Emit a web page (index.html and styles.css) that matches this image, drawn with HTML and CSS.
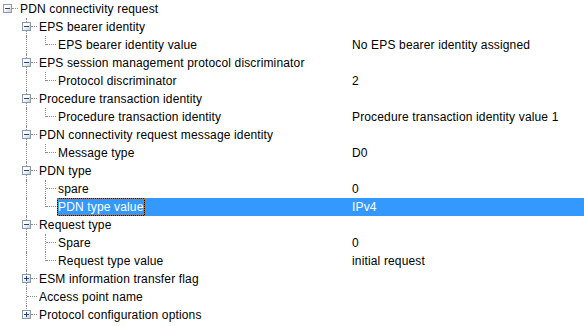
FILE: index.html
```html
<!DOCTYPE html>
<html lang="en">
<head>
    <meta charset="UTF-8">
    <title>PDN connectivity request</title>
    <link rel="stylesheet" href="styles.css">
</head>
<body>

    <div class="tree">
        <div class="row">
            <span class="g first"><i class="box minus"></i><b class="h"></b></span>
            <div class="item"><div class="col"><span class="name">PDN connectivity request</span></div><span class="value"></span></div>
        </div>

        <div class="row">
            <span class="g first"></span>
            <span class="g tee"><i class="box minus"></i><b class="h"></b></span>
            <div class="item"><div class="col"><span class="name">EPS bearer identity</span></div><span class="value"></span></div>
        </div>
        <div class="row">
            <span class="g first"></span>
            <span class="g pipe"></span>
            <span class="g last"><b class="h"></b></span>
            <div class="item"><div class="col"><span class="name">EPS bearer identity value</span></div><span class="value">No EPS bearer identity assigned</span></div>
        </div>

        <div class="row">
            <span class="g first"></span>
            <span class="g tee"><i class="box minus"></i><b class="h"></b></span>
            <div class="item"><div class="col"><span class="name">EPS session management protocol discriminator</span></div><span class="value"></span></div>
        </div>
        <div class="row">
            <span class="g first"></span>
            <span class="g pipe"></span>
            <span class="g last"><b class="h"></b></span>
            <div class="item"><div class="col"><span class="name">Protocol discriminator</span></div><span class="value">2</span></div>
        </div>

        <div class="row">
            <span class="g first"></span>
            <span class="g tee"><i class="box minus"></i><b class="h"></b></span>
            <div class="item"><div class="col"><span class="name">Procedure transaction identity</span></div><span class="value"></span></div>
        </div>
        <div class="row">
            <span class="g first"></span>
            <span class="g pipe"></span>
            <span class="g last"><b class="h"></b></span>
            <div class="item"><div class="col"><span class="name">Procedure transaction identity</span></div><span class="value">Procedure transaction identity value 1</span></div>
        </div>

        <div class="row">
            <span class="g first"></span>
            <span class="g tee"><i class="box minus"></i><b class="h"></b></span>
            <div class="item"><div class="col"><span class="name">PDN connectivity request message identity</span></div><span class="value"></span></div>
        </div>
        <div class="row">
            <span class="g first"></span>
            <span class="g pipe"></span>
            <span class="g last"><b class="h"></b></span>
            <div class="item"><div class="col"><span class="name">Message type</span></div><span class="value">D0</span></div>
        </div>

        <div class="row">
            <span class="g first"></span>
            <span class="g tee"><i class="box minus"></i><b class="h"></b></span>
            <div class="item"><div class="col"><span class="name">PDN type</span></div><span class="value"></span></div>
        </div>
        <div class="row">
            <span class="g first"></span>
            <span class="g pipe"></span>
            <span class="g tee"><b class="h"></b></span>
            <div class="item"><div class="col"><span class="name">spare</span></div><span class="value">0</span></div>
        </div>
        <div class="row selected">
            <span class="g first"></span>
            <span class="g pipe"></span>
            <span class="g last"><b class="h"></b></span>
            <div class="item"><div class="col"><span class="name">PDN type value</span></div><span class="value">IPv4</span></div>
        </div>

        <div class="row">
            <span class="g first"></span>
            <span class="g tee"><i class="box minus"></i><b class="h"></b></span>
            <div class="item"><div class="col"><span class="name">Request type</span></div><span class="value"></span></div>
        </div>
        <div class="row">
            <span class="g first"></span>
            <span class="g pipe"></span>
            <span class="g tee"><b class="h"></b></span>
            <div class="item"><div class="col"><span class="name">Spare</span></div><span class="value">0</span></div>
        </div>
        <div class="row">
            <span class="g first"></span>
            <span class="g pipe"></span>
            <span class="g last"><b class="h"></b></span>
            <div class="item"><div class="col"><span class="name">Request type value</span></div><span class="value">initial request</span></div>
        </div>

        <div class="row">
            <span class="g first"></span>
            <span class="g tee"><i class="box plus"></i><b class="h"></b></span>
            <div class="item"><div class="col"><span class="name">ESM information transfer flag</span></div><span class="value"></span></div>
        </div>
        <div class="row">
            <span class="g first"></span>
            <span class="g tee"><b class="h"></b></span>
            <div class="item"><div class="col"><span class="name">Access point name</span></div><span class="value"></span></div>
        </div>
        <div class="row">
            <span class="g first"></span>
            <span class="g last"><i class="box plus"></i><b class="h"></b></span>
            <div class="item"><div class="col"><span class="name">Protocol configuration options</span></div><span class="value"></span></div>
        </div>
    </div>

</body>
</html>
```

FILE: styles.css
```css
body {
    margin: 0;
    background: #fff;
    font-family: "Liberation Sans", Arial, sans-serif;
    font-size: 12px;
    letter-spacing: 0.15px;
    color: #000;
}
.tree {
    width: 584px;
}
.row {
    display: flex;
    height: 18px;
    line-height: 18px;
}

/* gutter cells with the dotted tree lines */
.g {
    --c: 9px;
    position: relative;
    flex: none;
    width: 19px;
    height: 18px;
}
.g.first {
    --c: 7px;
    width: 17px;
}
.g.pipe::before,
.g.tee::before,
.g.last::before {
    content: "";
    position: absolute;
    left: var(--c);
    top: 0;
    bottom: 0;
    border-left: 1px dotted #8e8e8e;
}
.g.last::before {
    bottom: auto;
    height: 9px;
}
.g .h {
    position: absolute;
    left: calc(var(--c) + 1px);
    right: -1px;
    top: 8px;
    border-top: 1px dotted #8e8e8e;
}
.g .box + .h {
    left: calc(var(--c) + 5px);
}
.g:last-of-type {
    margin-right: 2px;
}

/* expander buttons */
.box {
    position: absolute;
    left: calc(var(--c) - 4px);
    top: 4px;
    width: 7px;
    height: 7px;
    border: 1px solid #8b9bb0;
    background: linear-gradient(135deg, #fff 35%, #cfccc0);
    z-index: 1;
}
.box::before,
.box::after {
    content: "";
    position: absolute;
    background: #23418f;
}
.box::before {
    left: 1px;
    top: 3px;
    width: 5px;
    height: 1px;
}
.box.plus::after {
    left: 3px;
    top: 1px;
    width: 1px;
    height: 5px;
}

/* label + value */
.item {
    flex: 1;
    display: flex;
    min-width: 0;
}
.col {
    flex: 1;
    white-space: nowrap;
}
.name {
    display: inline-block;
    height: 16px;
    line-height: 16px;
    padding-right: 1px;
    border: 1px solid transparent;
}
.value {
    flex: none;
    width: 232px;
    white-space: nowrap;
}
.selected .item {
    background: #3399ff;
    color: #fff;
}
.selected .name {
    border: 1px dotted #cc6600;
    background: linear-gradient(#3399ff, #3399ff) padding-box, linear-gradient(#000, #000) border-box;
}
```
